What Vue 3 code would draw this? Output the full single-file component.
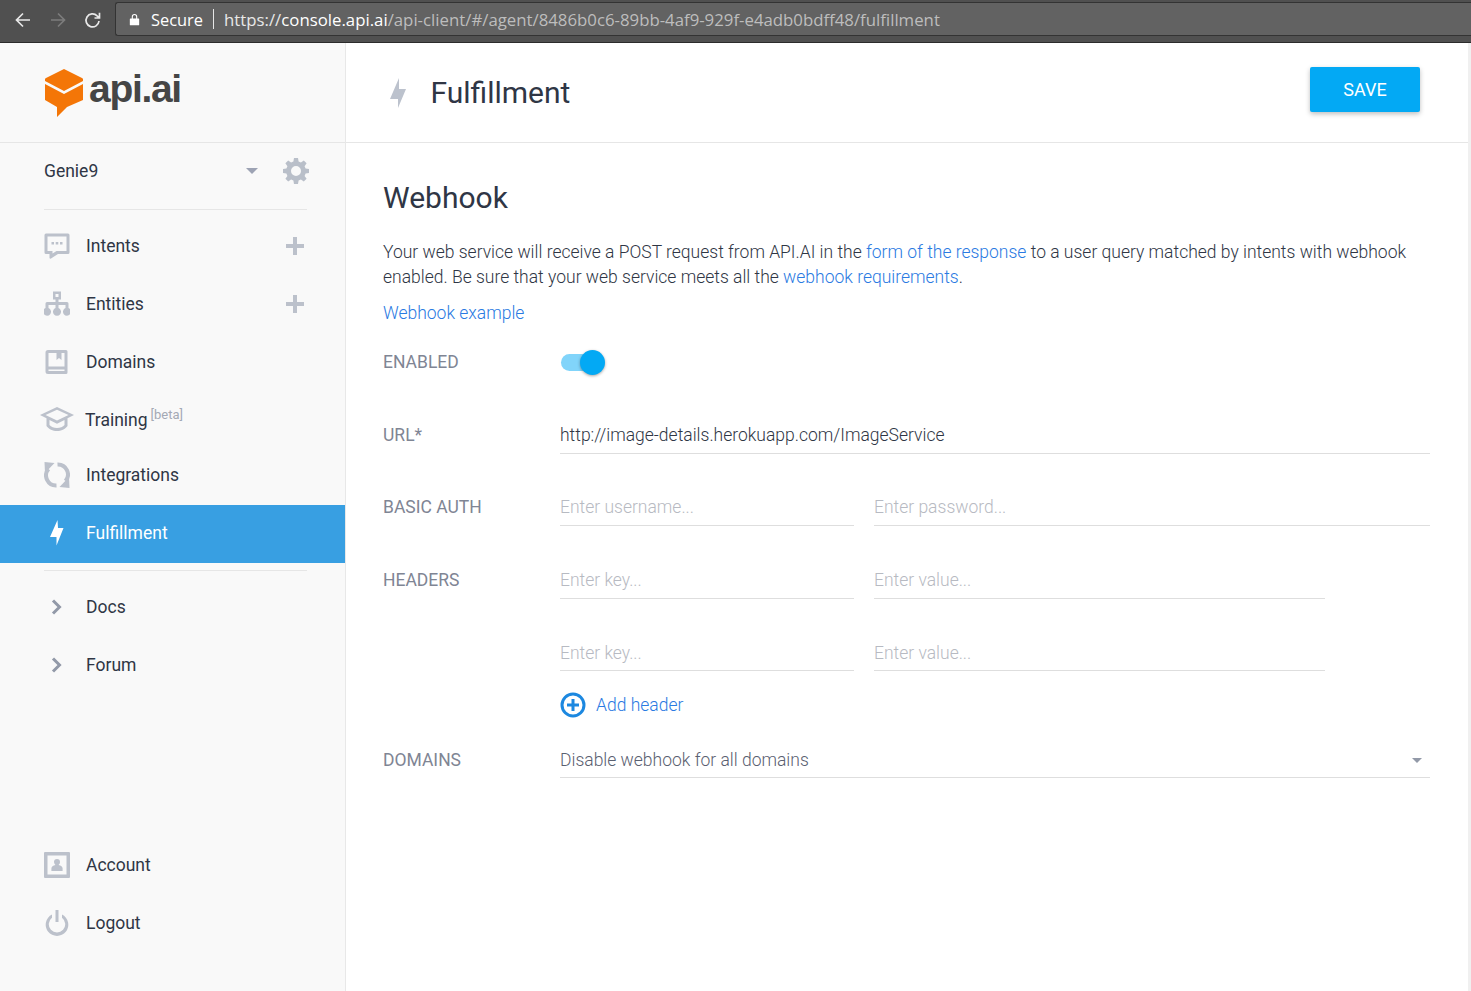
<template>
    <div class="page">
        <div class="browser-bar">
            <svg class="nav-icon" viewBox="0 0 20 20"><path d="M17 10H4M10 3.500 3.500 10l6.500 6.500" /></svg>
            <svg class="nav-icon off" viewBox="0 0 20 20"><path d="M3 10h13M10 3.500l6.500 6.500-6.500 6.500" /></svg>
            <svg class="nav-icon" viewBox="0 0 20 20"><path d="M16 11a6.500 6.500 0 1 1-1.900-5.200L16.500 8M16.500 2.800V8h-5" /></svg>
            <div class="omnibox">
                <svg class="lock" viewBox="0 0 12 14"><path d="M1.500 6h9a.6.6 0 0 1 .6.6v6a.6.6 0 0 1-.6.6h-9a.6.6 0 0 1-.6-.6v-6a.6.6 0 0 1 .6-.6zM3 6V4a3 3 0 0 1 6 0v2H7.800V4a1.800 1.800 0 0 0-3.600 0v2z" /></svg>
                <span class="secure">Secure</span>
                <span class="sep"></span>
                <span class="url"><span class="dim-s">https://</span><span class="host">console.api.ai</span><span class="dim">/api-client/#/agent/8486b0c6-89bb-4af9-929f-e4adb0bdff48/fulfillment</span></span>
            </div>
        </div>

        <div class="app">
            <aside class="sidebar">
                <div class="logo">
                    <svg class="logo-mark" viewBox="0 0 38 48">
                        <path fill="#f47607" d="M19 0 37 9a1.500 1.500 0 0 1 1 1.500V12L19 22 0 12v-1.500A1.500 1.500 0 0 1 1 9z" />
                        <path fill="#f47607" d="M0 15 19 25 38 15V31L22 38 12 48V38L0 31z" />
                    </svg>
                    <span class="logo-text">api.ai</span>
                </div>

                <div class="agent">
                    <span class="agent-name">Genie9</span>
                    <span class="caret"></span>
                    <svg class="gear" viewBox="0 0 26 26">
                        <path d="M11 0h4l.6 3.500 2.300 1 2.900-2 2.800 2.800-2 2.900 1 2.300 3.400.5v4l-3.400.6-1 2.300 2 2.900-2.800 2.800-2.900-2-2.300 1L15 26h-4l-.6-3.400-2.300-1-2.900 2-2.800-2.800 2-2.900-1-2.300L0 15v-4l3.400-.5 1-2.300-2-2.900 2.800-2.800 2.900 2 2.300-1zM13 8a5 5 0 1 0 0 10 5 5 0 0 0 0-10z" fill-rule="evenodd" />
                    </svg>
                </div>

                <nav class="menu main">
                    <a class="item">
                        <svg class="icon" viewBox="0 0 26 26"><path d="M2 .5h22a1.500 1.500 0 0 1 1.500 1.500v17.500A1.500 1.500 0 0 1 24 21H14l-7 4.500a1 1 0 0 1-1.500-1V21H2A1.500 1.500 0 0 1 .5 19.500V2A1.500 1.500 0 0 1 2 .5zM3.500 3.500v14.500h5v2.500l4-2.500h10V3.500zM7.500 9h2.500v2.500H7.500zm4.200 0h2.600v2.500h-2.600zM16 9h2.500v2.500H16z" fill-rule="evenodd" /></svg>
                        <span class="label">Intents</span>
                        <span class="plus"></span>
                    </a>
                    <a class="item">
                        <svg class="icon" viewBox="0 0 26 26"><path d="M9 .500h8v8h-2.500V11H23a1.500 1.500 0 0 1 1.500 1.500V17a4 4 0 1 1-3 0v-3h-7v3a4 4 0 1 1-3 0v-3h-7v3a4 4 0 1 1-3 0v-4.500A1.500 1.500 0 0 1 3 11h8.500V8.500H9zm2.500 2.500v3h3V3z" fill-rule="evenodd" /></svg>
                        <span class="label">Entities</span>
                        <span class="plus"></span>
                    </a>
                    <a class="item">
                        <svg class="icon" viewBox="0 0 26 26"><path d="M4 1h18a1.500 1.500 0 0 1 1.500 1.500v21A1.500 1.500 0 0 1 22 25H4a2.500 2.500 0 0 1-2.500-2.500v-19A2.500 2.500 0 0 1 4 1zm.5 3v13.500h16V4h-3v7l-2.500-2-2.500 2V4zm0 16.500v1.500h16v-1.500z" fill-rule="evenodd" /></svg>
                        <span class="label">Domains</span>
                    </a>
                    <a class="item training">
                        <svg class="icon-wide" viewBox="0 0 34 26"><path d="M17 1 34 9 27.500 12.300V20c-2 3-6.500 5-10.500 5S8.500 23 6.500 20v-7.700L0 9zM5.500 9 17 14.500 28.500 9 17 3.800zM9.500 14v5c1.500 2 4.500 3 7.500 3s6-1 7.500-3v-5L17 17.800z" fill-rule="evenodd" /></svg>
                        <span class="label">Training<sup class="beta">[beta]</sup></span>
                    </a>
                    <a class="item nudge">
                        <svg class="icon" viewBox="0 0 26 26">
                            <path d="M.5 0 10.500 1 1 11z" />
                            <path d="M25.500 26 15.500 25 25 15z" />
                            <path class="arc" d="M4.500 7A10 10 0 0 0 12.500 23.500M13.500 2.500A10 10 0 0 1 21.500 19" />
                        </svg>
                        <span class="label">Integrations</span>
                    </a>
                    <a class="item active nudge">
                        <svg class="icon bolt" viewBox="0 0 26 26"><path d="M13.500 0 6 17h6.500v8.500L19.500 8H14z" /></svg>
                        <span class="label">Fulfillment</span>
                    </a>
                </nav>

                <div class="divider"></div>

                <nav class="menu">
                    <a class="item">
                        <svg class="chev" viewBox="0 0 26 26"><path d="M9 6.500l6.500 6.500L9 19.500" /></svg>
                        <span class="label">Docs</span>
                    </a>
                    <a class="item">
                        <svg class="chev" viewBox="0 0 26 26"><path d="M9 6.500l6.500 6.500L9 19.500" /></svg>
                        <span class="label">Forum</span>
                    </a>
                </nav>

                <nav class="menu bottom">
                    <a class="item">
                        <svg class="icon" viewBox="0 0 26 26"><path d="M1 0h24a1 1 0 0 1 1 1v24a1 1 0 0 1-1 1H1a1 1 0 0 1-1-1V1a1 1 0 0 1 1-1zm2.500 3.500v19h19v-19zM13 7a3 3 0 0 1 3 3c0 1.300-.6 2.300-1.400 2.900 2.300.5 4 1.700 4 3.600V19H7.400v-2.500c0-1.900 1.700-3.100 4-3.600A3.700 3.700 0 0 1 10 10a3 3 0 0 1 3-3z" fill-rule="evenodd" /></svg>
                        <span class="label">Account</span>
                    </a>
                    <a class="item">
                        <svg class="icon" viewBox="0 0 26 26"><path d="M11.500 0h3v12h-3zM8 4.500v3.300a8.200 8.200 0 1 0 10 0V4.500a11.300 11.300 0 1 1-10 0z" /></svg>
                        <span class="label">Logout</span>
                    </a>
                </nav>
            </aside>

            <main class="content">
                <header class="top">
                    <svg class="top-bolt" viewBox="0 0 16 30"><path d="M9 0 0 21h8v9l8-19H9z" /></svg>
                    <h1 class="title">Fulfillment</h1>
                    <button class="save">SAVE</button>
                </header>

                <section class="body">
                    <h2 class="heading">Webhook</h2>
                    <p class="intro">Your web service will receive a POST request from API.AI in the <a>form of the response</a> to a user query matched by intents with webhook enabled. Be sure that your web service meets all the <a>webhook requirements</a>.</p>
                    <p class="example"><a>Webhook example</a></p>

                    <div class="row enabled">
                        <span class="field-label">ENABLED</span>
                        <span class="toggle"><span class="knob"></span></span>
                    </div>

                    <div class="row">
                        <span class="field-label">URL*</span>
                        <div class="input full value">http://image-details.herokuapp.com/ImageService</div>
                    </div>

                    <div class="row">
                        <span class="field-label">BASIC AUTH</span>
                        <div class="input first ph">Enter username...</div>
                        <div class="input grow ph">Enter password...</div>
                    </div>

                    <div class="row">
                        <span class="field-label">HEADERS</span>
                        <div class="input first ph">Enter key...</div>
                        <div class="input second ph">Enter value...</div>
                    </div>

                    <div class="row last">
                        <span class="field-label"></span>
                        <div class="input first ph">Enter key...</div>
                        <div class="input second ph">Enter value...</div>
                    </div>

                    <div class="add-header">
                        <svg class="add-icon" viewBox="0 0 26 26">
                            <circle cx="13" cy="13" r="11" />
                            <path d="M13 7v12M7 13h12" />
                        </svg>
                        <a>Add header</a>
                    </div>

                    <div class="row domains">
                        <span class="field-label">DOMAINS</span>
                        <div class="input full select">
                            <span>Disable webhook for all domains</span>
                            <span class="select-caret"></span>
                        </div>
                    </div>
                </section>
            </main>
        </div>
    </div>
</template>

<script setup>
</script>

<style>
html,
body {
    margin: 0;
    background: #fff;
}
</style>

<style scoped>
.page {
    height: 991px;
    overflow: hidden;
    display: flex;
    flex-direction: column;
    font-family: Roboto, sans-serif;
}

.browser-bar {
    box-sizing: border-box;
    height: 43px;
    flex: none;
    background: #505050;
    border-bottom: 1px solid #2b2b2b;
    display: flex;
    align-items: flex-start;
    padding: 10px 0 0 13px;
    gap: 15px;
}

.nav-icon {
    width: 20px;
    height: 20px;
    fill: none;
    stroke: #e8e8e8;
    stroke-width: 1.700;
}

.nav-icon.off {
    stroke: #7c7c7c;
}

.omnibox {
    box-sizing: border-box;
    margin: -8px 0 0 -3px;
    height: 34px;
    flex: 1;
    background: #626262;
    border: 1px solid #333;
    border-right: none;
    border-radius: 3px 0 0 3px;
    display: flex;
    align-items: center;
    padding-left: 13px;
    font-family: "Open Sans", sans-serif;
    font-size: 16.400px;
    color: #fff;
    white-space: nowrap;
}

.lock {
    width: 11px;
    height: 13px;
    fill: #fff;
}

.secure {
    margin-left: 11px;
}

.sep {
    width: 1px;
    height: 20px;
    background: #e6e6e6;
    margin: 0 10px;
}

.url {
    font-size: 16.800px;
}

.dim-s {
    color: #e8e8e8;
}

.host {
    color: #fff;
}

.dim {
    color: #bdbdbd;
}

.app {
    flex: 1;
    display: flex;
    min-height: 0;
}

.sidebar {
    box-sizing: border-box;
    width: 346px;
    flex: none;
    background: #f9f9f9;
    border-right: 1px solid #e8e8e8;
    display: flex;
    flex-direction: column;
    color: #2f3645;
}

.logo {
    box-sizing: border-box;
    height: 100px;
    border-bottom: 1px solid #e6e6e6;
    display: flex;
    align-items: flex-start;
    padding: 26px 0 0 45px;
}

.logo-mark {
    width: 38px;
    height: 48px;
}

.logo-text {
    font-family: "Liberation Sans", sans-serif;
    font-weight: 700;
    font-size: 39px;
    line-height: 38px;
    letter-spacing: -1.300px;
    color: #454545;
    margin: 1px 0 0 6px;
}

.agent {
    box-sizing: border-box;
    display: flex;
    align-items: center;
    margin: 0 38px 0 44px;
    height: 67px;
    border-bottom: 1px solid #e6e6e6;
    padding-bottom: 11px;
    font-size: 17.500px;
}

.agent-name {
    flex: 1;
}

.caret {
    border: 6px solid transparent;
    border-top: 6px solid #9da3b4;
    border-bottom: 0;
    margin-right: 25px;
}

.gear {
    width: 26px;
    height: 26px;
    fill: #b9bfc9;
    margin-right: -2px;
}

.menu {
    display: flex;
    flex-direction: column;
}

.menu.main {
    margin-top: 7px;
}

.item {
    box-sizing: border-box;
    height: 58px;
    display: flex;
    align-items: center;
    padding: 0 41px 0 44px;
    font-size: 17.500px;
}

.item.training {
    height: 56px;
}

.item.nudge {
    padding-bottom: 2px;
}

.item.active {
    background: #389fe2;
    color: #fff;
}

.icon {
    width: 26px;
    height: 26px;
    fill: #bcc1cb;
    flex: none;
    margin-right: 16px;
}

.icon-wide {
    width: 34px;
    height: 26px;
    fill: #bcc1cb;
    flex: none;
    margin: 0 11px 0 -4px;
}

.icon.bolt {
    fill: #fff;
}

.arc {
    fill: none;
    stroke: #bcc1cb;
    stroke-width: 4;
}

.chev {
    width: 26px;
    height: 26px;
    flex: none;
    margin-right: 16px;
    fill: none;
    stroke: #9299a8;
    stroke-width: 3;
}

.label {
    flex: 1;
}

.training .label {
    position: relative;
    top: 1px;
}

.beta {
    font-size: 13px;
    color: #a4a9b5;
    margin-left: 3px;
    vertical-align: super;
    line-height: 0;
}

.plus {
    width: 18px;
    height: 18px;
    background:
        linear-gradient(#bcc1cb, #bcc1cb) center / 18px 4px no-repeat,
        linear-gradient(#bcc1cb, #bcc1cb) center / 4px 18px no-repeat;
}

.divider {
    margin: 7px 38px 7px 44px;
    height: 1px;
    background: #e6e6e6;
}

.bottom {
    margin-top: auto;
    margin-bottom: 39px;
}

.content {
    flex: 1;
    min-width: 0;
    display: flex;
    flex-direction: column;
    background: #fff;
    border-right: 3px solid #f0f0f0;
}

.top {
    box-sizing: border-box;
    height: 100px;
    flex: none;
    border-bottom: 1px solid #e6e6e6;
    display: flex;
    align-items: center;
    padding: 0 48px 0 44px;
}

.top-bolt {
    width: 16px;
    height: 30px;
    fill: #bcc2cd;
}

.title {
    flex: 1;
    margin: 0 0 0 24.500px;
    font-size: 30px;
    font-weight: 400;
    color: #2f3645;
}

.save {
    width: 110px;
    height: 45px;
    border: none;
    border-radius: 2px;
    background: #03a9f4;
    color: #fff;
    font-family: Roboto, sans-serif;
    font-size: 18px;
    font-weight: 400;
    box-shadow: 0 2px 5px rgba(0, 0, 0, .26);
    margin-top: -6px;
}

.body {
    padding: 37px 38px 0 37px;
    font-size: 17.500px;
    font-weight: 300;
    color: #2f3645;
}

.heading {
    margin: 0;
    font-size: 30px;
    font-weight: 400;
    line-height: 36px;
}

.intro {
    margin: 24px 0 0;
    line-height: 25px;
}

.body a {
    color: #2a7ae2;
}

.example {
    margin: 11px 0 0;
    line-height: 25px;
}

.row {
    display: flex;
    align-items: flex-start;
    height: 72.400px;
}

.field-label {
    flex: none;
    width: 177px;
    font-weight: 400;
    font-size: 17.500px;
    line-height: 26px;
    padding-top: 4px;
    color: #7f8594;
}

.enabled .field-label {
    padding-top: 3px;
}

.domains .field-label {
    padding-top: 5px;
}

.input {
    box-sizing: border-box;
    height: 36px;
    line-height: 34px;
    border-bottom: 1px solid #dedede;
}

.last .input {
    line-height: 36px;
}

.input.full {
    flex: 1;
}

.first {
    width: 294px;
    margin-right: 20px;
}

.grow {
    flex: 1;
}

.second {
    width: 451px;
}

.ph {
    color: #b7bac2;
}

.value {
    color: #2f3645;
}

.enabled {
    height: 72px;
    margin-top: 20px;
}

.toggle {
    position: relative;
    width: 33px;
    height: 17px;
    margin: 8px 0 0 1px;
    border-radius: 9px;
    background: #81d4fa;
}

.knob {
    position: absolute;
    top: -4px;
    right: -11px;
    width: 25px;
    height: 25px;
    border-radius: 50%;
    background: #03a9f4;
    box-shadow: 0 1px 3px rgba(0, 0, 0, .35);
}

.add-header {
    display: flex;
    align-items: center;
    height: 28px;
    margin: -16.600px 0 0 177px;
}

.add-icon {
    width: 26px;
    height: 26px;
    fill: none;
    stroke: #1c88e0;
    stroke-width: 3;
    margin-right: 10px;
}

.domains {
    margin-top: 23px;
}

.select {
    display: flex;
    align-items: center;
    justify-content: space-between;
    padding: 2px 8px 0 0;
    color: #5a6070;
}

.select-caret {
    border: 5px solid transparent;
    border-top: 5px solid #9299a8;
    border-bottom: 0;
}
</style>
